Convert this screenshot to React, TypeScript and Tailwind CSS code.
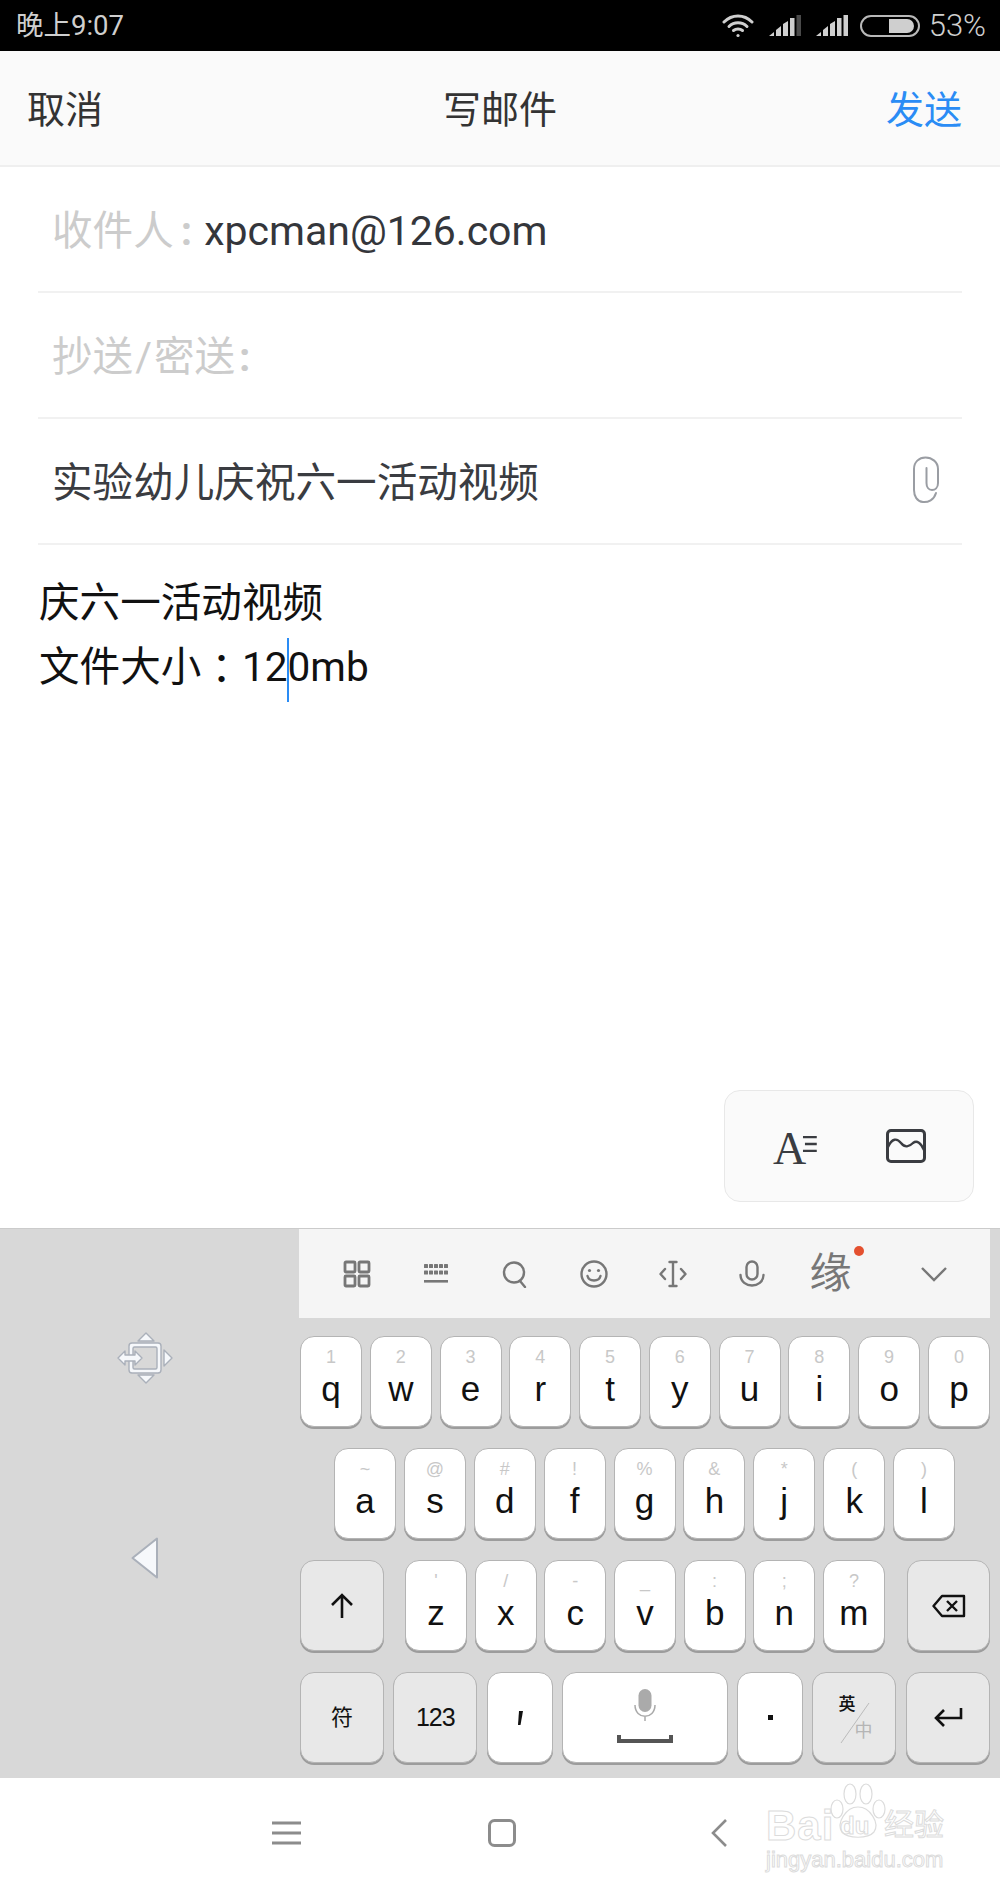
import React from 'react';

const cjk = 'font-[Roboto,"Noto_Sans_CJK_SC",sans-serif]';
const keyFont = 'font-["Liberation_Sans","Noto_Sans_CJK_SC",sans-serif]';

const row1 = [['q', '1'], ['w', '2'], ['e', '3'], ['r', '4'], ['t', '5'], ['y', '6'], ['u', '7'], ['i', '8'], ['o', '9'], ['p', '0']];
const row2 = [['a', '~'], ['s', '@'], ['d', '#'], ['f', '!'], ['g', '%'], ['h', '&'], ['j', '*'], ['k', '('], ['l', ')']];
const row3 = [['z', "'"], ['x', '/'], ['c', '-'], ['v', '_'], ['b', ':'], ['n', ';'], ['m', '?']];

const Key: React.FC<{ className?: string; gray?: boolean; children?: React.ReactNode }> = ({ className = '', gray, children }) => (
  <div className={`relative flex-none h-[91px] rounded-[14px] border border-[#b4b4b4] shadow-[0_2px_0_#9c9c9c] flex flex-col items-center justify-center ${gray ? 'bg-[#e8e8e8]' : 'bg-white'} ${className}`}>
    {children}
  </div>
);

const LetterKey: React.FC<{ letter: string; hint: string; className?: string }> = ({ letter, hint, className = 'w-[62px]' }) => (
  <Key className={`${className} !justify-start pt-[8px]`}>
    <span className="text-[18px] leading-[24px] text-[#c8c8c8]">{hint}</span>
    <span className="text-[35px] leading-[40px] text-[#111]">{letter}</span>
  </Key>
);

const StatusIcons = () => (
  <div className="flex items-center">
    <svg width="32" height="24" viewBox="0 0 32 24" fill="none" stroke="#cfcfcf" strokeWidth="3" strokeLinecap="round">
      <path d="M2 8 C10 0 22 0 30 8" />
      <path d="M7 12.5 C12 7.5 20 7.5 25 12.5" />
      <path d="M11.5 16.5 C14 14.5 18 14.5 20.5 16.5" />
      <circle cx="16" cy="21.5" r="1.6" fill="#cfcfcf" stroke="none" />
    </svg>
    <svg className="ml-[15px]" width="32" height="22" viewBox="0 0 32 22">
      <path d="M0 21 L5 17 V21 Z M7 15 L12 11 V21 H7 Z M14 9 L19 6 V21 H14 Z" fill="#cfcfcf" />
      <rect x="21" y="3" width="4.5" height="18" fill="#cfcfcf" />
      <rect x="27.5" y="0" width="4.5" height="21" fill="#4a4a4a" />
    </svg>
    <svg className="ml-[15px]" width="32" height="22" viewBox="0 0 32 22">
      <path d="M0 21 L5 17 V21 Z M7 15 L12 11 V21 H7 Z M14 9 L19 6 V21 H14 Z" fill="#cfcfcf" />
      <rect x="21" y="3" width="4.5" height="18" fill="#cfcfcf" />
      <rect x="27.5" y="0" width="4.5" height="21" fill="#cfcfcf" />
    </svg>
    <svg className="ml-[12px]" width="60" height="22" viewBox="0 0 60 22">
      <rect x="1" y="1" width="58" height="20" rx="10" fill="none" stroke="#b8b8b8" strokeWidth="2" />
      <path d="M29 4 H47 A7 7 0 0 1 47 18 H29 Z" fill="#cfcfcf" />
    </svg>
  </div>
);

const toolStroke = { fill: 'none', stroke: '#777', strokeWidth: 2.4, strokeLinecap: 'round' as const, strokeLinejoin: 'round' as const };

const toolIcons = [
  <svg key="grid" width="28" height="28" viewBox="0 0 28 28" {...toolStroke} strokeWidth={2.8}>
    <rect x="2" y="2" width="10" height="10" rx="1" /><rect x="16" y="2" width="10" height="10" rx="1" />
    <rect x="2" y="16" width="10" height="10" rx="1" /><rect x="16" y="16" width="10" height="10" rx="1" />
  </svg>,
  <svg key="kb" width="24" height="22" viewBox="0 0 24 22" fill="#777">
    {[0, 5, 10, 15, 20].map(x => <rect key={x} x={x} y="1" width="4" height="4" rx=".6" />)}
    {[0, 5, 10, 15, 20].map(x => <rect key={x} x={x} y="7.5" width="4" height="4" rx=".6" />)}
    <rect x="0" y="17" width="24" height="2.6" />
  </svg>,
  <svg key="search" width="26" height="28" viewBox="0 0 26 28" {...toolStroke}>
    <circle cx="12" cy="12.5" r="10" /><path d="M18 21 L23 27" />
  </svg>,
  <svg key="smile" width="28" height="28" viewBox="0 0 28 28" {...toolStroke}>
    <circle cx="14" cy="14" r="12.5" /><path d="M7.5 16 C9 22 19 22 20.5 16" />
    <circle cx="9.5" cy="10.5" r="1.6" fill="#777" stroke="none" /><circle cx="18.5" cy="10.5" r="1.6" fill="#777" stroke="none" />
  </svg>,
  <svg key="cursor" width="28" height="28" viewBox="0 0 28 28" {...toolStroke}>
    <path d="M10.5 2 H17.5 M14 2 V26 M10.5 26 H17.5 M6 9 L1.5 14 L6 19 M22 9 L26.5 14 L22 19" />
  </svg>,
  <svg key="mic" width="26" height="28" viewBox="0 0 26 28" {...toolStroke}>
    <rect x="7.5" y="1.5" width="11" height="18" rx="5.5" /><path d="M1.5 15 C2 29 24 29 24.5 15" />
  </svg>,
];

const Toolbar = () => (
  <div className="h-[89px] w-[691px] bg-[#f5f5f5] flex items-center pl-[18px]">
    {toolIcons.map((icon, i) => (
      <div key={i} className="w-[79px] flex justify-center">{icon}</div>
    ))}
    <div className="relative w-[79px] flex justify-center">
      <span className={`text-[42px] leading-none text-[#777] ${cjk}`}>缘</span>
      <span className="absolute right-[6px] top-[-7px] w-[10px] h-[10px] rounded-full bg-[#e4502f]" />
    </div>
    <div className="w-[79px] ml-[24px] flex justify-center">
      <svg width="28" height="16" viewBox="0 0 28 16" fill="none" stroke="#777" strokeWidth="2.4"><path d="M2 2 L14 14 L26 2" /></svg>
    </div>
  </div>
);

const Keyboard = () => (
  <div className={`h-[550px] flex-none flex bg-[#d8d8d8] border-t border-[#cbcbcb] ${keyFont}`}>
    <div className="w-[299px] flex-none flex flex-col items-center pr-[10px] pt-[103px]">
      <svg width="56" height="52" viewBox="0 0 56 52">
        <g fill="#f6f8fb" stroke="#aab0ba" strokeWidth="1.4" strokeLinejoin="round">
          <path d="M29 1 L37 9 H21 Z" />
          <path d="M29 51 L37 43 H21 Z" />
          <path d="M55 26 L47 18 V34 Z" />
          <rect x="12" y="11" width="32" height="30" rx="3" />
          <rect x="16" y="15" width="24" height="22" rx="1.5" fill="#d8d8d8" />
          <path d="M1 26 L8 19 V23 H18 V19 L25 26 L18 33 V29 H8 V33 Z" />
        </g>
      </svg>
      <svg className="mt-[153px]" width="28" height="42" viewBox="0 0 28 42">
        <path d="M26 1.5 V40.5 L1.5 21 Z" fill="#f6f8fb" stroke="#aab0ba" strokeWidth="2" strokeLinejoin="round" />
      </svg>
    </div>
    <div className="flex-1 flex flex-col">
      <Toolbar />
      <div className="flex flex-col gap-[21px] pl-[1px] pt-[18px]">
        <div className="flex w-[690px] justify-between">
          {row1.map(([l, h]) => <LetterKey key={l} letter={l} hint={h} />)}
        </div>
        <div className="flex w-[621px] ml-[34px] justify-between">
          {row2.map(([l, h]) => <LetterKey key={l} letter={l} hint={h} />)}
        </div>
        <div className="flex w-[690px]">
          <Key gray className="w-[84px]">
            <svg width="24" height="26" viewBox="0 0 24 26" fill="none" stroke="#111" strokeWidth="2.6"><path d="M12 25 V3 M2 12 L12 2 L22 12" /></svg>
          </Key>
          <div className="flex ml-[21px] w-[480px] justify-between">
            {row3.map(([l, h]) => <LetterKey key={l} letter={l} hint={h} />)}
          </div>
          <Key gray className="w-[83px] ml-auto">
            <svg width="34" height="24" viewBox="0 0 34 24" fill="none" stroke="#111" strokeWidth="2.4" strokeLinejoin="round"><path d="M10 2 H32 V22 H10 L1.5 12 Z" /><path d="M15 7 L25 17 M25 7 L15 17" /></svg>
          </Key>
        </div>
        <div className="flex w-[690px] gap-[9.3px] text-[#111]">
          <Key gray className="w-[84px]"><span className={`text-[22px] ${cjk}`}>符</span></Key>
          <Key gray className="w-[84px]"><span className="text-[25px] tracking-[-1px]">123</span></Key>
          <Key className="w-[66px]">
            <svg width="6" height="14" viewBox="0 0 6 14"><path d="M2 0 H6 L3.5 14 H1 Z" fill="#111" /></svg>
          </Key>
          <Key className="w-[166px]">
            <svg width="56" height="60" viewBox="0 0 56 60" fill="none">
              <rect x="21.5" y="1" width="13" height="23" rx="6.5" fill="#aaa" />
              <path d="M18 17 C18 32 38 32 38 17 M28 28 V33" stroke="#aaa" strokeWidth="1.5" />
              <path d="M2 47 V53 H54 V47" stroke="#555" strokeWidth="4" />
            </svg>
          </Key>
          <Key className="w-[66px]"><span className="w-[5px] h-[5px] bg-[#111]" /></Key>
          <Key gray className="w-[84px]">
            <span className={`absolute left-[25px] top-[23px] text-[17px] leading-none font-medium ${cjk}`}>英</span>
            <span className={`absolute left-[41px] top-[49px] text-[18px] leading-none text-[#b5b5b5] ${cjk}`}>中</span>
            <svg className="absolute left-[26px] top-[28px]" width="32" height="44" viewBox="0 0 32 44"><path d="M30 2 L2 42" stroke="#bbb" strokeWidth="1" /></svg>
          </Key>
          <Key gray className="w-[84px]">
            <svg width="30" height="22" viewBox="0 0 30 22" fill="none" stroke="#111" strokeWidth="2.6"><path d="M28 1 V11 H3 M11 3 L3 11 L11 19" /></svg>
          </Key>
        </div>
      </div>
    </div>
  </div>
);

const Watermark = () => (
  <div className="absolute left-[766px] top-[2px] w-[180px] h-[92px] text-transparent [-webkit-text-stroke:1px_#dcdcdc] font-['Liberation_Sans',sans-serif] select-none">
    <svg className="absolute left-[62px] top-[3px]" width="60" height="56" viewBox="0 0 60 56" fill="#fff" stroke="#dcdcdc" strokeWidth="1.2">
      <ellipse cx="22" cy="11" rx="6" ry="10" />
      <ellipse cx="38" cy="11" rx="6" ry="10" />
      <ellipse cx="9" cy="26" rx="6" ry="9" />
      <ellipse cx="51" cy="26" rx="6" ry="9" />
      <path d="M30 24 C42 24 52 40 46 49 C40 56 20 56 14 49 C8 40 18 24 30 24 Z" />
    </svg>
    <span className="absolute left-0 top-[24px] text-[42px] font-bold leading-[44px] tracking-[1px]">Bai</span>
    <span className="absolute left-[74px] top-[31px] text-[24px] font-bold leading-[30px]">du</span>
    <span className={`absolute left-[118px] top-[24px] text-[30px] leading-[42px] ${cjk}`}>经验</span>
    <div className="absolute left-0 top-[68px] text-[22px] leading-[24px] whitespace-nowrap">jingyan.baidu.com</div>
  </div>
);

const NavBar = () => (
  <div className="relative h-[111px] flex-none bg-white flex items-center pl-[272px] pb-[1px]">
    <svg width="29" height="26" viewBox="0 0 29 26" fill="none" stroke="#8c8c8c" strokeWidth="3"><path d="M0 3 H29 M0 13 H29 M0 23 H29" /></svg>
    <svg className="ml-[187px]" width="28" height="28" viewBox="0 0 28 28" fill="none" stroke="#8c8c8c" strokeWidth="3"><rect x="1.5" y="1.5" width="25" height="25" rx="5" /></svg>
    <svg className="ml-[195px]" width="16" height="28" viewBox="0 0 16 28" fill="none" stroke="#8c8c8c" strokeWidth="2.6"><path d="M15 1 L2 14 L15 27" /></svg>
    <Watermark />
  </div>
);

const Row: React.FC<{ children: React.ReactNode; className?: string }> = ({ children, className = '' }) => (
  <div className={`h-[126px] mx-[38px] pl-[14px] pt-[5px] flex items-center border-b-2 border-[#f1f1f1] text-[40.6px] ${className}`}>{children}</div>
);

export default function App() {
  return (
    <div className={`w-[1000px] h-[1889px] flex flex-col bg-white overflow-hidden ${cjk}`}>
      <div className="h-[51px] flex-none bg-black flex items-center justify-between pl-[16px] pr-[14px] text-[#cfcfcf]">
        <span className="text-[27.5px] leading-none pt-[1px]">晚上9:07</span>
        <div className="flex items-center">
          <StatusIcons />
          <span className="ml-[9px] text-[31px] leading-none font-light">53%</span>
        </div>
      </div>

      <div className="h-[116px] flex-none relative bg-[#fafafa] border-b-2 border-[#efefef] flex items-center justify-between pl-[27px] pr-[38px] pt-[5px] text-[38px]">
        <span className="text-[#333]">取消</span>
        <span className="absolute left-[443px] text-[#333]">写邮件</span>
        <span className="text-[#2a8cf5]">发送</span>
      </div>

      <Row>
        <span className="text-[#cccccc]">收件人</span>
        <span className="text-[#cccccc] ml-[7px] font-bold">:</span>
        <span className="ml-[12px] text-[41px] text-[#34363b]">xpcman@126.com</span>
      </Row>
      <Row className="text-[#cccccc]">
        <span>抄送</span><span className="mx-[2px]">/</span><span>密送</span><span className="ml-[4px] font-bold">:</span>
      </Row>
      <Row className="justify-between pr-[22px] text-[#3a3c41] !pl-[14px]">
        <span>实验幼儿庆祝六一活动视频</span>
        <svg className="-mt-[8px]" width="28" height="48" viewBox="0 0 28 48" fill="none" stroke="#9a9da3" strokeWidth="2" strokeLinecap="round">
          <path d="M24 37 C22 44 16 46.5 11 46 C5 45.5 2 40 2 34 V13 C2 6 7 1.5 13.5 1.5 C20 1.5 26 6 26 13 V27 C26 32 23 34 20 34 C16.5 34 14.5 31 14.5 27 V12" />
        </svg>
      </Row>

      <div className="flex-1 flex flex-col px-[39px] pt-[26px] text-[40.6px] leading-[64px] text-[#111]">
        <div>庆六一活动视频</div>
        <div className="flex items-center">
          <span>文件大小</span>
          <span className='font-["Noto_Sans_CJK_TC"]'>：</span>
          <span>12</span>
          <span className="relative w-0 self-stretch">
            <span className="absolute left-[-1px] top-[3px] w-[2px] h-[64px] bg-[#2a8cf5]" />
          </span>
          <span>0mb</span>
        </div>
        <div className="mt-auto mb-[26px] self-end -mr-[13px] w-[250px] h-[112px] rounded-[16px] bg-[#fafafa] border border-[#e8e8e8] flex items-center pl-[48px]">
          <div className="flex items-end w-[44px] h-[36px]">
            <span className="font-['Liberation_Serif',serif] text-[46px] leading-[36px] text-[#3a3c41] -mb-[3px]">A</span>
            <svg className="-ml-[4px] mb-[7px]" width="15" height="22" viewBox="0 0 15 22" fill="none" stroke="#3a3c41" strokeWidth="2.4"><path d="M1 2 H15 M3 9 H15 M1 16 H15" /></svg>
          </div>
          <svg className="ml-[69px]" width="40" height="34" viewBox="0 0 40 34" fill="none" stroke="#3a3c41" strokeWidth="3" strokeLinejoin="round">
            <rect x="1.5" y="1.5" width="37" height="31" rx="3.5" />
            <path d="M2 18 C6 9 11 9 15 14 C19 19 23 18 27 14 C31 11 35 14 38 21" strokeWidth="2.4" />
          </svg>
        </div>
      </div>

      <Keyboard />
      <NavBar />
    </div>
  );
}
